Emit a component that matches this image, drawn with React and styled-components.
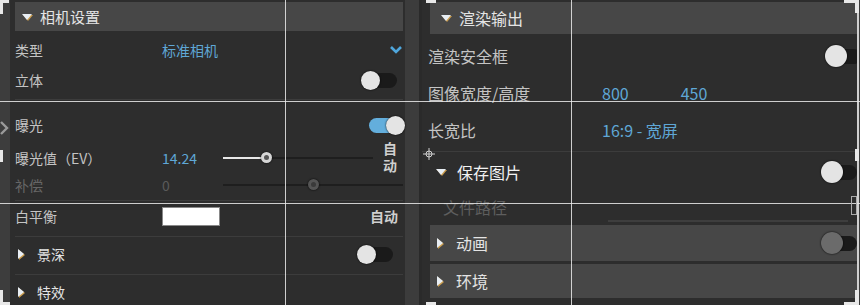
import React from 'react'
import styled, { createGlobalStyle } from 'styled-components'

const Global = createGlobalStyle`
  html, body { margin: 0; padding: 0; background: #3a3a3a; }
  body { font-family: "Noto Sans CJK SC", "Noto Sans", sans-serif; }
`;

const Frame = styled.div`
  position: relative;
  width: 860px;
  height: 305px;
  display: flex;
  overflow: hidden;
  background: #3b3b3b;
`;
const Gutter = styled.div`
  width: 10px;
  flex-shrink: 0;
  background: #3d3d3d;
`;
const LeftPanel = styled.div`
  width: 395px;
  flex-shrink: 0;
  background: #2d2d2d;
  display: flex;
  flex-direction: column;
  padding: 2px 2px 0 5px;
  box-sizing: border-box;
`;
const Splitter = styled.div`
  width: 17px;
  flex-shrink: 0;
  background: #3c3c3c;
  border-right: 3px solid #2a2a2a;
  box-sizing: border-box;
`;
const RightPanel = styled.div`
  width: 435px;
  flex-shrink: 0;
  background: #2d2d2d;
  display: flex;
  flex-direction: column;
  padding: 2px 0 0 6px;
  box-sizing: border-box;
  overflow: hidden;
`;
const Header = styled.div`
  height: ${p => p.$h}px;
  margin-top: ${p => p.$mt || 0}px;
  margin-left: ${p => p.$ml || 0}px;
  background: ${p => p.$flat ? 'transparent' : '#474747'};
  display: flex;
  align-items: center;
  padding-left: ${p => p.$pl || 7}px;
  gap: ${p => p.$gap || 8}px;
  color: ${p => p.$bright ? '#f2f2f2' : '#e4e4e4'};
  font-size: ${p => p.$fs || 15}px;
  flex-shrink: 0;
  position: relative;
  overflow: hidden;
`;
const Tri = styled.span`
  width: 0;
  height: 0;
  ${p => p.$open ? `
    border-left: 5px solid transparent;
    border-right: 5px solid transparent;
    border-top: 6px solid #e8eef4;
  ` : `
    border-top: 5px solid transparent;
    border-bottom: 5px solid transparent;
    border-left: 6px solid #e8eef4;
  `}
  filter: drop-shadow(1px 1px 0 #c89a4a);
`;
const Row = styled.div`
  height: ${p => p.$h || 30}px;
  margin-top: ${p => p.$mt || 0}px;
  display: grid;
  grid-template-columns: ${p => p.$cols || '147px 1fr'};
  align-items: center;
  font-size: ${p => p.$fs || 14}px;
  line-height: 1;
  color: ${p => p.$dim ? '#666' : '#c4c4c4'};
  flex-shrink: 0;
  position: relative;
`;
const Label = styled.span`
  white-space: nowrap;
  padding-left: ${p => p.$indent || 0}px;
  color: ${p => p.$dim ? '#5e5e5e' : 'inherit'};
`;
const Value = styled.span`
  color: ${p => p.$dim ? '#5a5a5a' : '#5fa7d6'};
  white-space: nowrap;
  display: flex;
  gap: ${p => p.$gap || 0}px;
`;
const Cell = styled.div`
  display: flex;
  align-items: center;
  justify-content: ${p => p.$justify || 'space-between'};
  height: 100%;
`;
const Divider = styled.div`
  height: 1px;
  margin-top: ${p => p.$mt || 0}px;
  margin-left: ${p => p.$ml || 0}px;
  background: #3c3c3c;
  flex-shrink: 0;
`;
const Track = styled.div`
  width: 34px;
  height: 15px;
  border-radius: 8px;
  background: ${p => p.$on ? '#63aedc' : '#1a1a1a'};
  position: relative;
  flex-shrink: 0;
`;
const Knob = styled.div`
  position: absolute;
  top: 50%;
  ${p => p.$on ? 'right: -2px;' : 'left: -2px;'}
  width: ${p => p.$size || 19}px;
  height: ${p => p.$size || 19}px;
  margin-top: -${p => (p.$size || 19) / 2}px;
  border-radius: 50%;
  background: ${p => p.$gray ? '#6b6b6b' : '#e4e4e4'};
  box-shadow: 0 0 2px #000;
`;
const Toggle = ({ on, size, gray, style }) => (
  <Track $on={on} style={style}>
    <Knob $on={on} $size={size} $gray={gray} />
  </Track>
);
const SliderBox = styled.div`
  position: relative;
  width: ${p => p.$w}px;
  height: 12px;
`;
const SliderLine = styled.div`
  position: absolute;
  left: 0;
  right: 0;
  top: 5px;
  height: 2px;
  background: #1e1e1e;
`;
const SliderFill = styled.div`
  position: absolute;
  left: 0;
  top: 5px;
  height: 2px;
  background: #e8e8e8;
`;
const Thumb = styled.div`
  position: absolute;
  top: 0;
  width: 11px;
  height: 11px;
  margin-left: -6px;
  border-radius: 50%;
  background: ${p => p.$dim ? '#555' : '#d6d6d6'};
  box-shadow: 0 0 2px #000;
  &::after {
    content: '';
    position: absolute;
    left: 3px; top: 3px;
    width: 5px; height: 5px;
    border-radius: 50%;
    background: ${p => p.$dim ? '#3a3a3a' : '#555'};
  }
`;
const Slider = ({ w, pos, fill, dim }) => (
  <SliderBox $w={w}>
    <SliderLine />
    {fill && <SliderFill style={{ width: pos }} />}
    <Thumb $dim={dim} style={{ left: pos }} />
  </SliderBox>
);
const Auto = styled.span`
  font-weight: 700;
  font-size: 14px;
  color: #cfcfcf;
  line-height: 17px;
  white-space: nowrap;
  ${p => p.$vertical && `
    writing-mode: vertical-rl;
    letter-spacing: 3px;
    justify-self: start;
    margin: 2px 0 0 2px;
  `}
`;
const Swatch = styled.div`
  width: 56px;
  height: 17px;
  background: #fff;
  border: 1px solid #888;
`;
const Chevron = styled.svg`
  width: 14px;
  height: 10px;
`;
const PathLine = styled.div`
  position: absolute;
  left: 180px;
  right: 9px;
  bottom: 0;
  height: 2px;
  background: #3e3e3e;
`;

/* screenshot-tool overlay */
const VLine = styled.div`
  position: absolute;
  top: 0;
  bottom: 0;
  left: ${p => p.$x}px;
  width: ${p => p.$w || 1}px;
  background: rgba(235, 235, 235, 0.85);
`;
const HLine = styled.div`
  position: absolute;
  left: 0;
  right: 0;
  top: ${p => p.$y}px;
  height: 1px;
  background: rgba(235, 235, 235, 0.85);
`;
const Handle = styled.div`
  position: absolute;
  left: ${p => p.$x}px;
  top: ${p => p.$y}px;
  width: ${p => p.$w}px;
  height: ${p => p.$h}px;
  box-sizing: border-box;
  background: ${p => p.$outline ? 'transparent' : '#e8e8e8'};
  border: ${p => p.$outline ? '1px solid #aaa' : 'none'};
`;
const EdgeArrow = styled.svg`
  position: absolute;
  left: 0;
  top: 121px;
`;
const Cross = styled.svg`
  position: absolute;
  left: 423px;
  top: 148px;
`;

export default function App() {
  return (
    <>
      <Global />
      <Frame>
        <Gutter />
        <LeftPanel>
          <Header $h={29}>
            <Tri $open />
            <span>相机设置</span>
          </Header>
          <Row $mt={4}>
            <Label>类型</Label>
            <Cell>
              <Value>标准相机</Value>
              <Chevron viewBox="0 0 14 10">
                <path d="M2 2 L7 7 L12 2" stroke="#4fa6dc" strokeWidth="2.6" fill="none" />
              </Chevron>
            </Cell>
          </Row>
          <Row>
            <Label>立体</Label>
            <Cell $justify="flex-end">
              <Toggle style={{ marginRight: 6 }} />
            </Cell>
          </Row>
          <Divider $mt={4} />
          <Row $mt={10}>
            <Label>曝光</Label>
            <Cell $justify="flex-end">
              <Toggle on />
            </Cell>
          </Row>
          <Row $cols="147px 61px 1fr 24px">
            <Label>曝光值（EV）</Label>
            <Value>14.24</Value>
            <Slider w={150} pos={44} fill />
            <Auto $vertical>自动</Auto>
          </Row>
          <Row $dim $cols="147px 61px 1fr">
            <Label>补偿</Label>
            <Value $dim>0</Value>
            <Slider w={180} pos={91} dim />
          </Row>
          <Divider />
          <Row>
            <Label>白平衡</Label>
            <Cell>
              <Swatch />
              <Auto style={{ marginRight: 5 }}>自动</Auto>
            </Cell>
          </Row>
          <Divider $mt={5} />
          <Row $mt={2} $cols="1fr auto">
            <Header $flat $h={30} $pl={3} $gap={13} $fs={14}>
              <Tri />
              <span>景深</span>
            </Header>
            <Toggle style={{ marginRight: 10 }} />
          </Row>
          <Divider $mt={5} />
          <Row $mt={2} $cols="1fr">
            <Header $flat $h={30} $pl={3} $gap={13} $fs={14}>
              <Tri />
              <span>特效</span>
            </Header>
          </Row>
        </LeftPanel>
        <Splitter />
        <RightPanel>
          <Header $h={32} $ml={2} $fs={16} $pl={11}>
            <Tri $open />
            <span>渲染输出</span>
          </Header>
          <Row $h={34} $mt={5} $fs={16} $cols="174px 1fr">
            <Label>渲染安全框</Label>
            <Cell $justify="flex-end">
              <Toggle size={22} style={{ marginRight: -4 }} />
            </Cell>
          </Row>
          <Row $h={34} $mt={3} $fs={16} $cols="174px 1fr">
            <Label>图像宽度/高度</Label>
            <Value $gap={52}><span>800</span><span>450</span></Value>
          </Row>
          <Row $h={34} $mt={3} $fs={16} $cols="174px 1fr">
            <Label>长宽比</Label>
            <Value>16:9 - 宽屏</Value>
          </Row>
          <Divider $mt={4} $ml={-6} />
          <Row $h={34} $mt={3} $fs={16} $cols="1fr auto">
            <Header $flat $bright $h={34} $pl={8} $gap={11} $fs={16}>
              <Tri $open />
              <span>保存图片</span>
            </Header>
            <Toggle size={22} />
          </Row>
          <Row $h={31} $mt={2} $fs={16} $cols="1fr">
            <Label $dim $indent={15}>文件路径</Label>
            <PathLine />
          </Row>
          <Header $h={36} $mt={3} $ml={2} $fs={16} $pl={7} $gap={13}>
            <Tri />
            <span style={{ flex: 1 }}>动画</span>
            <Toggle size={22} gray />
          </Header>
          <Header $h={34} $mt={3} $ml={2} $fs={16} $pl={7} $gap={13}>
            <Tri />
            <span>环境</span>
          </Header>
        </RightPanel>

        <VLine $x={285} />
        <VLine $x={571} />
        <HLine $y={101} />
        <HLine $y={203} />
        <VLine $x={857} $w={2} />
        <Handle $x={0} $y={0} $w={9} $h={3} />
        <Handle $x={0} $y={0} $w={3} $h={14} />
        <Handle $x={426} $y={0} $w={10} $h={3} />
        <Handle $x={844} $y={0} $w={15} $h={3} />
        <Handle $x={855} $y={0} $w={4} $h={13} />
        <Handle $x={0} $y={150} $w={3} $h={12} />
        <Handle $x={855} $y={149} $w={4} $h={12} />
        <Handle $x={851} $y={196} $w={6} $h={19} $outline />
        <Handle $x={0} $y={290} $w={3} $h={15} />
        <Handle $x={0} $y={302} $w={10} $h={3} />
        <Handle $x={426} $y={302} $w={10} $h={3} />
        <Handle $x={844} $y={302} $w={15} $h={3} />
        <Handle $x={855} $y={290} $w={4} $h={15} />
        <EdgeArrow width="9" height="14" viewBox="0 0 9 14">
          <path d="M1 1 L7 7 L1 13" stroke="#9a9a9a" strokeWidth="2.4" fill="none" />
        </EdgeArrow>
        <Cross width="12" height="12" viewBox="0 0 12 12">
          <circle cx="6" cy="6" r="3" stroke="#cfcfcf" fill="none" />
          <path d="M6 0V12M0 6H12" stroke="#cfcfcf" />
        </Cross>
      </Frame>
    </>
  );
}
